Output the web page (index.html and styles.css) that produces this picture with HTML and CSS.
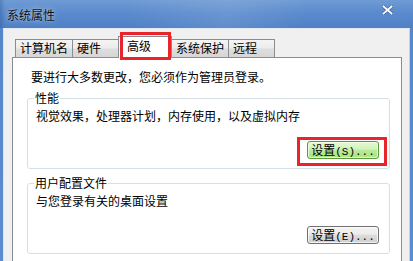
FILE: index.html
```html
<!DOCTYPE html>
<html lang="zh-CN">
<head>
<meta charset="utf-8">
<title>系统属性</title>
<link rel="stylesheet" href="styles.css">
</head>
<body>
<div class="window">
  <div class="titlebar">
    <span class="title">系统属性</span>
    <svg class="close" width="11" height="10" viewBox="0 0 11 10">
      <path d="M1.5 1.5 L9.5 8.5 M9.5 1.5 L1.5 8.5" stroke="#2a4670" stroke-width="3" stroke-linecap="square" fill="none" opacity="0.55"/>
      <path d="M1.5 1.5 L9.5 8.5 M9.5 1.5 L1.5 8.5" stroke="#ffffff" stroke-width="1.8" stroke-linecap="square" fill="none"/>
    </svg>
  </div>
  <div class="frame">
    <div class="client">
      <div class="tabs">
        <div class="tab">计算机名</div>
        <div class="tab">硬件</div>
        <div class="tab tab-sel">高级</div>
        <div class="tab">系统保护</div>
        <div class="tab">远程</div>
      </div>
      <div class="panel">
        <p class="note">要进行大多数更改，您必须作为管理员登录。</p>
        <fieldset class="group">
          <legend>性能</legend>
          <p class="desc">视觉效果，处理器计划，内存使用，以及虚拟内存</p>
          <div class="actions">
            <button class="btn btn-green mark">设置<span class="acc">(S)...</span></button>
          </div>
        </fieldset>
        <fieldset class="group group-2">
          <legend>用户配置文件</legend>
          <p class="desc">与您登录有关的桌面设置</p>
          <div class="actions">
            <button class="btn">设置<span class="acc">(E)...</span></button>
          </div>
        </fieldset>
      </div>
    </div>
  </div>
</div>
</body>
</html>
```

FILE: styles.css
```css
* { box-sizing: border-box; }
html, body { margin: 0; padding: 0; }
body {
  width: 413px;
  height: 261px;
  overflow: hidden;
  font-family: "Noto Sans CJK SC", "Noto Sans", sans-serif;
  font-size: 12px;
  line-height: 14px;
  color: #000;
  background: #5a8bcf;
}
.window {
  width: 413px;
  height: 261px;
  overflow: hidden;
  display: flex;
  flex-direction: column;
}
.titlebar {
  height: 28px;
  flex: none;
  display: flex;
  align-items: flex-start;
  padding: 8px 0 0 7px;
  background:
    linear-gradient(90deg, rgba(40,80,140,0.35) 0px, rgba(40,80,140,0) 5px),
    linear-gradient(90deg, rgba(255,255,255,0) 30%, rgba(255,255,255,0.10) 55%, rgba(255,255,255,0) 75%),
    linear-gradient(180deg, #6f9bd5 0%, #5b8bcd 45%, #4f80c5 100%);
}
.title {
  font-size: 12px;
  line-height: 14px;
  color: #111;
  text-shadow: 0 0 6px rgba(255,255,255,0.55), 0 0 2px rgba(255,255,255,0.4);
}
.close {
  margin-left: auto;
  margin-right: 20px;
  margin-top: -3px;
}
.frame {
  flex: 1;
  min-height: 0;
  padding: 0 3px;
  background: linear-gradient(180deg, #5687cb, #5b8cd0);
}
.client {
  height: 100%;
  background: #f0f0f0;
  border-left: 1px solid #dce4ee;
  border-right: 1px solid #c9d3df;
  border-top: 1px solid #e2e8f0;
  padding: 7px 7px 0 8px;
}
.tabs {
  display: flex;
  align-items: flex-end;
  padding-left: 4px;
  margin-bottom: -1px;
}
.tab {
  height: 18px;
  min-width: 47px;
  margin-left: -1px;
  margin-bottom: 1px;
  padding: 1px 4px 0 4px;
  border: 1px solid #898c95;
  border-bottom: none;
  white-space: nowrap;
  background: linear-gradient(180deg, #f4f4f4 0%, #ececec 48%, #dedede 52%, #d6d6d6 100%);
}
.tab-sel {
  position: relative;
  z-index: 1;
  height: 22px;
  min-width: 54px;
  margin-bottom: 0;
  padding: 2px 4px 0 8px;
  background: #fff;
}
.tab-sel::after {
  content: "";
  position: absolute;
  top: -5px;
  left: 1px;
  right: 0;
  bottom: -2px;
  border: 3px solid #e8252b;
}
.panel {
  background: #fff;
  border: 1px solid #898c95;
  padding: 12px 11px 20px 14px;
}
.note {
  margin: 0;
  padding-left: 4px;
}
.group {
  margin: 7px 0 0 0;
  padding: 4px 10px 9px 8px;
  border: 1px solid #d5dfe5;
  border-radius: 3px;
  min-width: 0;
}
.group legend {
  padding: 0 1px;
  margin-left: -2px;
  line-height: 14px;
}
.desc {
  margin: 0;
}
.actions {
  display: flex;
  justify-content: flex-end;
  margin-top: 18px;
}
.btn {
  position: relative;
  width: 72px;
  height: 18px;
  padding: 0;
  border: 1px solid #707070;
  border-radius: 3px;
  font-family: "Noto Sans CJK SC", "Noto Sans", sans-serif;
  font-size: 12px;
  line-height: 15px;
  color: #000;
  background: linear-gradient(180deg, #f4f4f4 0%, #ebebeb 45%, #dcdcdc 52%, #cfcfcf 100%);
  box-shadow: inset 0 0 0 1px rgba(255,255,255,0.75);
}
.btn-green {
  border-color: #5a9a3a;
  background: linear-gradient(180deg, #e6f9d8 0%, #d0f3b8 45%, #b9eb96 52%, #abe282 100%);
  box-shadow: inset 0 0 0 1px rgba(240,255,230,0.8);
}
.acc {
  font-family: "Liberation Mono", "DejaVu Sans Mono", monospace;
  font-size: 11px;
}
.mark::after {
  content: "";
  position: absolute;
  top: -5px;
  left: -11px;
  right: -9px;
  bottom: -8px;
  border: 3px solid #e8252b;
}
```
